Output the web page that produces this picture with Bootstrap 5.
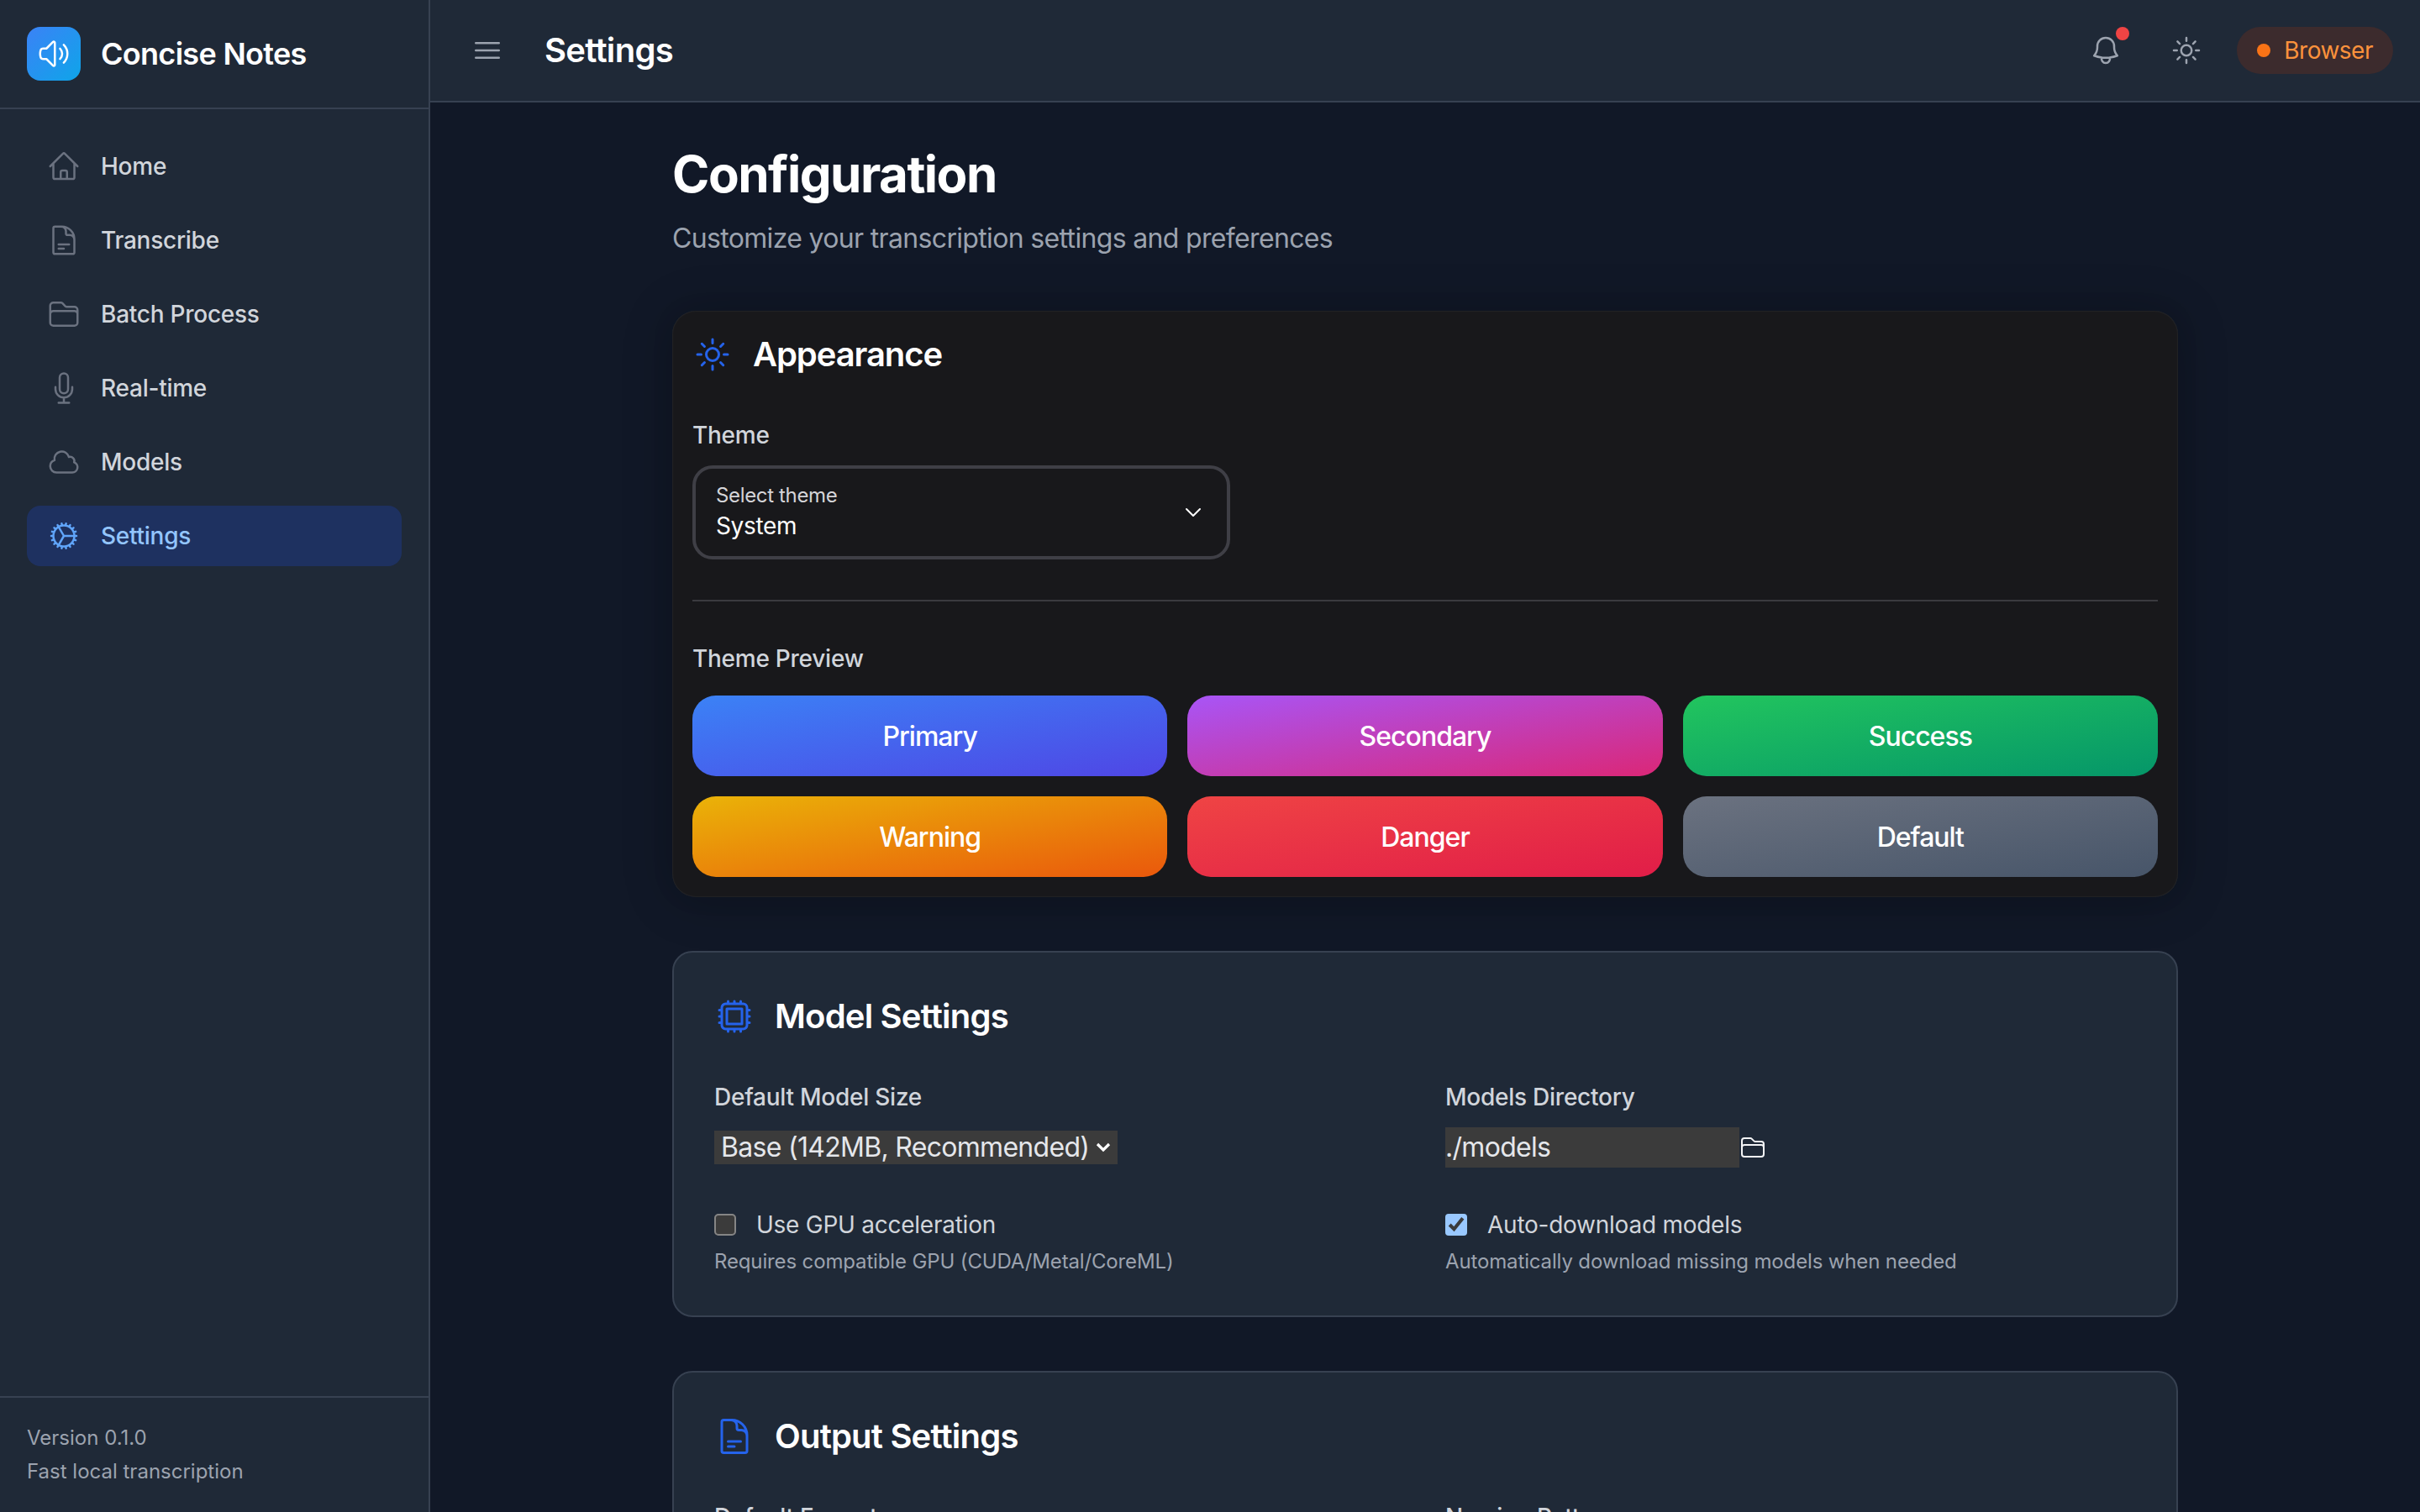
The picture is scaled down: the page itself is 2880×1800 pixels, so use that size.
<!DOCTYPE html>
<html lang="en" data-bs-theme="dark">
  <head>
    <meta charset="UTF-8" />
    <meta name="viewport" content="width=device-width, initial-scale=1.0" />
    <title>Concise Notes - Settings</title>
    <link href="https://cdn.jsdelivr.net/npm/bootstrap@5.3.3/dist/css/bootstrap.min.css" rel="stylesheet" />
    <style>
      html, body { height: 100%; }
      body {
        font-family: Inter, "Liberation Sans", sans-serif;
        font-size: 28px;
        letter-spacing: -0.25px;
        background: #111827;
        color: #d1d5db;
        color-scheme: dark;
      }
      svg { display: block; flex: none; fill: none; stroke: currentColor; stroke-width: 1.5; stroke-linecap: round; stroke-linejoin: round; }
      .ico-20 { width: 40px; height: 40px; }
      .ico-24 { width: 48px; height: 48px; }
      .ico-16 { width: 32px; height: 32px; }

      /* sidebar */
      .side-bar { width: 512px; flex: none; background: #1f2937; border-right: 2px solid #374151; }
      .brand-row { height: 130px; padding: 0 32px; gap: 24px; border-bottom: 2px solid #374151; }
      .brand-logo { width: 64px; height: 64px; border-radius: 16px; background: linear-gradient(to bottom right, #3b82f6, #0ea5e9); color: #fff; }
      .brand-name { font-size: 36px; line-height: 56px; font-weight: 600; color: #fff; letter-spacing: -0.7px; }
      .side-nav { padding: 32px; gap: 16px; }
      .side-link { height: 72px; padding: 0 24px; gap: 24px; border-radius: 16px; color: #d1d5db; font-weight: 500; text-decoration: none; }
      .side-link svg { color: #6b7280; }
      .side-link.on { background: #1e3a8a80; color: #93c5fd; }
      .side-link.on svg { color: #60a5fa; }
      .side-foot { padding: 32px; border-top: 2px solid #374151; font-size: 24px; line-height: 32px; color: #9ca3af; letter-spacing: 0; }
      .side-foot p { margin: 0; }
      .side-foot p + p { margin-top: 8px; }

      /* top bar */
      .top-bar { height: 122px; flex: none; padding: 0 32px 0 48px; background: #1f2937; border-bottom: 2px solid #374151; }
      .top-title { font-size: 40px; line-height: 56px; font-weight: 600; color: #fff; margin: 0 0 0 48px; letter-spacing: -0.7px; }
      .top-btn { color: #9ca3af; background: none; border: 0; padding: 0; }
      .bell-dot { width: 16px; height: 16px; top: -8px; right: -8px; background: #ef4444; border-radius: 50%; }
      .mode-pill { height: 56px; padding: 0 24px; gap: 16px; border-radius: 28px; background: #3c2b2d; color: #fb923c; letter-spacing: -0.5px; }
      .mode-dot { width: 16px; height: 16px; border-radius: 50%; background: #f97316; }
      .top-tools { gap: 40px; }
      .bell-wrap { margin-right: 16px; }

      /* page */
      .page-area { background: #111827; min-height: 0; }
      .page-inner { width: 1792px; margin: 0 auto; padding-top: 49px; }
      .page-title { font-size: 60px; line-height: 72px; font-weight: 700; color: #fff; margin: 0 0 17px; letter-spacing: -1.5px; }
      .page-sub { font-size: 32px; line-height: 48px; color: #9ca3af; margin: 0 0 62px; letter-spacing: -0.66px; }

      /* appearance card */
      .look-card { background: #18181b; border: 0; border-radius: 28px; margin-bottom: 64px; box-shadow: 0 0 30px rgba(0, 0, 0, .06), 0 4px 60px rgba(0, 0, 0, .22), inset 0 0 2px rgba(255, 255, 255, .15); color: #d1d5db; }
      .look-head { padding: 24px; gap: 24px; }
      .look-head svg { color: #2563eb; }
      .look-title { font-size: 40px; line-height: 56px; font-weight: 600; color: #fff; margin: 0; letter-spacing: -1.1px; }
      .set-title { letter-spacing: -0.8px; }
      .look-body { padding: 24px; }
      .field-label { font-weight: 500; line-height: 40px; margin: 0 0 16px; display: block; }
      .theme-pick { width: 640px; height: 112px; padding: 0 24px; border: 4px solid #3f3f46; border-radius: 24px; background: none; text-align: left; color: #fff; letter-spacing: -0.35px; }
      .theme-pick small { display: block; font-size: 24px; line-height: 32px; color: #d4d4d8; }
      .theme-pick span { display: block; font-size: 28px; line-height: 40px; }
      .look-rule { height: 2px; margin: 48px 0; background: #3a3a3f; }
      .preview-grid { display: grid; grid-template-columns: repeat(3, 1fr); gap: 24px; }
      .preview-btn { height: 96px; border: 0; border-radius: 28px; padding: 2px 0 0; font-size: 32px; font-weight: 500; color: #fff; letter-spacing: -1px; }
      .grad-primary { background: linear-gradient(to bottom right, #3b82f6, #4f46e5); }
      .grad-secondary { background: linear-gradient(to bottom right, #a855f7, #db2777); }
      .grad-success { background: linear-gradient(to bottom right, #22c55e, #059669); }
      .grad-warning { background: linear-gradient(to bottom right, #eab308, #ea580c); }
      .grad-danger { background: linear-gradient(to bottom right, #ef4444, #e11d48); }
      .grad-default { background: linear-gradient(to bottom right, #6b7280, #475569); }

      /* settings panels */
      .set-panel { background: #1f2937; border: 2px solid #374151; border-radius: 24px; padding: 48px; margin-bottom: 64px; }
      .set-head { gap: 24px; margin-bottom: 48px; }
      .set-head svg { color: #2563eb; }
      .set-grid { display: grid; grid-template-columns: 1fr 1fr; gap: 48px; }
      .ctl-row { height: 48px; }
      .native-ctl { zoom: 2; font-family: inherit; font-size: 16px; letter-spacing: -0.35px; color: #e5e7eb; }
      select.native-ctl {
        appearance: none;
        width: 240px;
        height: 20px;
        padding: 0 4px;
        line-height: 19px;
        border: 0;
        border-radius: 0;
        background: #3b3b3b url("data:image/svg+xml,%3Csvg xmlns='http://www.w3.org/2000/svg' viewBox='0 0 9 6'%3E%3Cpath d='M1 1l3.5 3.5L8 1' fill='none' stroke='%23fff' stroke-width='1.6'/%3E%3C/svg%3E") no-repeat right 4px center / 9px 6px;
      }
      input.native-ctl[type="text"] { width: 175px; padding: 0; border: 0; background: #3b3b3b; outline: 0; }
      input.native-ctl[type="checkbox"] { margin: 0; }
      .folder-btn { background: none; border: 0; padding: 0; color: #f3f4f6; }
      .check-row { gap: 24px; line-height: 40px; }
      .check-row label { margin: 0; }
      .hint-line { margin: 8px 0 0; font-size: 24px; line-height: 32px; color: #9ca3af; letter-spacing: -0.14px; }
    </style>
  </head>
  <body class="d-flex overflow-hidden">
    <aside class="side-bar d-flex flex-column">
      <div class="brand-row d-flex align-items-center">
        <div class="brand-logo d-flex align-items-center justify-content-center">
          <svg class="ico-20" viewBox="0 0 24 24"><path d="M19.114 5.636a9 9 0 0 1 0 12.728M16.463 8.288a5.25 5.25 0 0 1 0 7.424M6.75 8.25l4.72-4.72a.75.75 0 0 1 1.28.53v15.88a.75.75 0 0 1-1.28.53l-4.72-4.72H4.51c-.88 0-1.704-.507-1.938-1.354A9.009 9.009 0 0 1 2.25 12c0-.83.112-1.633.322-2.396C2.806 8.756 3.63 8.25 4.51 8.25H6.75Z" /></svg>
        </div>
        <span class="brand-name">Concise Notes</span>
      </div>

      <nav class="side-nav d-flex flex-column flex-grow-1">
        <a class="side-link d-flex align-items-center" href="#">
          <svg class="ico-20" viewBox="0 0 24 24"><path d="m2.25 12 8.954-8.955c.44-.439 1.152-.439 1.591 0L21.75 12M4.5 9.75v10.125c0 .621.504 1.125 1.125 1.125H9.75v-4.875c0-.621.504-1.125 1.125-1.125h2.25c.621 0 1.125.504 1.125 1.125V21h4.125c.621 0 1.125-.504 1.125-1.125V9.75M8.25 21h8.25" /></svg>
          Home
        </a>
        <a class="side-link d-flex align-items-center" href="#">
          <svg class="ico-20" viewBox="0 0 24 24"><path d="M19.5 14.25v-2.625a3.375 3.375 0 0 0-3.375-3.375h-1.5A1.125 1.125 0 0 1 13.5 7.125v-1.5a3.375 3.375 0 0 0-3.375-3.375H8.25m0 12.75h7.5m-7.5 3H12M10.5 2.25H5.625c-.621 0-1.125.504-1.125 1.125v17.25c0 .621.504 1.125 1.125 1.125h12.75c.621 0 1.125-.504 1.125-1.125V11.25a9 9 0 0 0-9-9Z" /></svg>
          Transcribe
        </a>
        <a class="side-link d-flex align-items-center" href="#">
          <svg class="ico-20" viewBox="0 0 24 24"><path d="M2.25 12.75V12A2.25 2.25 0 0 1 4.5 9.75h15A2.25 2.25 0 0 1 21.75 12v.75m-8.69-6.44-2.12-2.12a1.5 1.5 0 0 0-1.061-.44H4.5A2.25 2.25 0 0 0 2.25 6v12a2.25 2.25 0 0 0 2.25 2.25h15A2.25 2.25 0 0 0 21.75 18V9a2.25 2.25 0 0 0-2.25-2.25h-5.379a1.5 1.5 0 0 1-1.06-.44Z" /></svg>
          Batch Process
        </a>
        <a class="side-link d-flex align-items-center" href="#">
          <svg class="ico-20" viewBox="0 0 24 24"><path d="M12 18.75a6 6 0 0 0 6-6v-1.5m-6 7.5a6 6 0 0 1-6-6v-1.5m6 7.5v3.75m-3.75 0h7.5M12 15.75a3 3 0 0 1-3-3V4.5a3 3 0 1 1 6 0v8.25a3 3 0 0 1-3 3Z" /></svg>
          Real-time
        </a>
        <a class="side-link d-flex align-items-center" href="#">
          <svg class="ico-20" viewBox="0 0 24 24"><path d="M2.25 15a4.5 4.5 0 0 0 4.5 4.5H18a3.75 3.75 0 0 0 1.332-7.257 3 3 0 0 0-3.758-3.848 5.25 5.25 0 0 0-10.233 2.33A4.5 4.5 0 0 0 2.25 15Z" /></svg>
          Models
        </a>
        <a class="side-link on d-flex align-items-center" href="#">
          <svg class="ico-20" viewBox="0 0 24 24"><path d="M4.5 12a7.5 7.5 0 0 0 15 0m-15 0a7.5 7.5 0 1 1 15 0m-15 0H3m16.5 0H21m-1.5 0H12m-8.457 3.077 1.41-.513m14.095-5.13 1.41-.513M5.106 17.785l1.15-.964m11.49-9.642 1.149-.964M7.501 19.795l.75-1.3m7.5-12.99.75-1.3m-6.063 16.658.26-1.477m2.605-14.772.26-1.477m0 17.726-.26-1.477M10.698 4.614l-.26-1.477M16.5 19.794l-.75-1.299M7.5 4.205 12 12m6.894 5.785-1.149-.964M6.256 7.178l-1.15-.964m15.352 8.864-1.41-.513M4.954 9.435l-1.41-.514M12.002 12l-3.75 6.495" /></svg>
          Settings
        </a>
      </nav>

      <div class="side-foot">
        <p>Version 0.1.0</p>
        <p>Fast local transcription</p>
      </div>
    </aside>

    <div class="d-flex flex-column flex-grow-1 overflow-hidden">
      <header class="top-bar d-flex align-items-center justify-content-between">
        <div class="d-flex align-items-center">
          <button class="top-btn" type="button" aria-label="Menu">
            <svg class="ico-20" viewBox="0 0 24 24"><path d="M3.75 6.75h16.5M3.75 12h16.5m-16.5 5.25h16.5" /></svg>
          </button>
          <h1 class="top-title">Settings</h1>
        </div>
        <div class="top-tools d-flex align-items-center">
          <button class="top-btn bell-wrap position-relative" type="button" aria-label="Notifications">
            <svg class="ico-20" viewBox="0 0 24 24"><path d="M14.857 17.082a23.848 23.848 0 0 0 5.454-1.31A8.967 8.967 0 0 1 18 9.75V9A6 6 0 0 0 6 9v.75a8.967 8.967 0 0 1-2.312 6.022c1.733.64 3.56 1.085 5.455 1.31m5.714 0a24.255 24.255 0 0 1-5.714 0m5.714 0a3 3 0 1 1-5.714 0" /></svg>
            <span class="bell-dot position-absolute"></span>
          </button>
          <button class="top-btn" type="button" aria-label="Theme">
            <svg class="ico-20" viewBox="0 0 24 24"><path d="M12 3v2.25m6.364.386-1.591 1.591M21 12h-2.25m-.386 6.364-1.591-1.591M12 18.75V21m-4.773-4.227-1.591 1.591M5.25 12H3m4.227-4.773L5.636 5.636M15.75 12a3.75 3.75 0 1 1-7.5 0 3.75 3.75 0 0 1 7.5 0Z" /></svg>
          </button>
          <div class="mode-pill d-flex align-items-center">
            <span class="mode-dot"></span>
            Browser
          </div>
        </div>
      </header>

      <main class="page-area flex-grow-1 overflow-hidden">
        <div class="page-inner">
          <h2 class="page-title">Configuration</h2>
          <p class="page-sub">Customize your transcription settings and preferences</p>

          <section class="card look-card">
            <div class="look-head d-flex align-items-center">
              <svg class="ico-24" viewBox="0 0 24 24"><path d="M12 3v2.25m6.364.386-1.591 1.591M21 12h-2.25m-.386 6.364-1.591-1.591M12 18.75V21m-4.773-4.227-1.591 1.591M5.25 12H3m4.227-4.773L5.636 5.636M15.75 12a3.75 3.75 0 1 1-7.5 0 3.75 3.75 0 0 1 7.5 0Z" /></svg>
              <h3 class="look-title">Appearance</h3>
            </div>
            <div class="look-body">
              <span class="field-label">Theme</span>
              <button class="theme-pick d-flex align-items-center justify-content-between" type="button">
                <div>
                  <small>Select theme</small>
                  <span>System</span>
                </div>
                <svg class="ico-16" viewBox="0 0 24 24"><path d="m6 9 6 6 6-6" /></svg>
              </button>
              <div class="look-rule"></div>
              <span class="field-label mb-4">Theme Preview</span>
              <div class="preview-grid">
                <button class="preview-btn grad-primary" type="button">Primary</button>
                <button class="preview-btn grad-secondary" type="button">Secondary</button>
                <button class="preview-btn grad-success" type="button">Success</button>
                <button class="preview-btn grad-warning" type="button">Warning</button>
                <button class="preview-btn grad-danger" type="button">Danger</button>
                <button class="preview-btn grad-default" type="button">Default</button>
              </div>
            </div>
          </section>

          <section class="set-panel">
            <div class="set-head d-flex align-items-center">
              <svg class="ico-24" viewBox="0 0 24 24"><path d="M8.25 3v1.5M4.5 8.25H3m18 0h-1.5M4.5 12H3m18 0h-1.5m-15 3.75H3m18 0h-1.5M8.25 19.5V21M12 3v1.5m0 15V21m3.75-18v1.5m0 15V21m-9-1.5h10.5a2.25 2.25 0 0 0 2.25-2.25V6.75a2.25 2.25 0 0 0-2.25-2.25H6.75A2.25 2.25 0 0 0 4.5 6.75v10.5a2.25 2.25 0 0 0 2.25 2.25Zm.75-12h9v9h-9v-9Z" /></svg>
              <h3 class="look-title set-title">Model Settings</h3>
            </div>
            <div class="set-grid">
              <div>
                <label class="field-label" for="model-size">Default Model Size</label>
                <div class="ctl-row d-flex align-items-center">
                  <select class="native-ctl" id="model-size">
                    <option>Base (142MB, Recommended)</option>
                  </select>
                </div>
              </div>
              <div>
                <label class="field-label" for="model-dir">Models Directory</label>
                <div class="ctl-row d-flex align-items-center">
                  <input class="native-ctl" id="model-dir" type="text" value="./models" />
                  <button class="folder-btn" type="button" aria-label="Browse">
                    <svg class="ico-16" viewBox="0 0 24 24"><path d="M2.25 12.75V12A2.25 2.25 0 0 1 4.5 9.75h15A2.25 2.25 0 0 1 21.75 12v.75m-8.69-6.44-2.12-2.12a1.5 1.5 0 0 0-1.061-.44H4.5A2.25 2.25 0 0 0 2.25 6v12a2.25 2.25 0 0 0 2.25 2.25h15A2.25 2.25 0 0 0 21.75 18V9a2.25 2.25 0 0 0-2.25-2.25h-5.379a1.5 1.5 0 0 1-1.06-.44Z" /></svg>
                  </button>
                </div>
              </div>
              <div>
                <div class="check-row d-flex align-items-center">
                  <input class="native-ctl" id="use-gpu" type="checkbox" />
                  <label for="use-gpu">Use GPU acceleration</label>
                </div>
                <p class="hint-line">Requires compatible GPU (CUDA/Metal/CoreML)</p>
              </div>
              <div>
                <div class="check-row d-flex align-items-center">
                  <input class="native-ctl" id="auto-dl" type="checkbox" checked />
                  <label for="auto-dl">Auto-download models</label>
                </div>
                <p class="hint-line">Automatically download missing models when needed</p>
              </div>
            </div>
          </section>

          <section class="set-panel">
            <div class="set-head d-flex align-items-center">
              <svg class="ico-24" viewBox="0 0 24 24"><path d="M19.5 14.25v-2.625a3.375 3.375 0 0 0-3.375-3.375h-1.5A1.125 1.125 0 0 1 13.5 7.125v-1.5a3.375 3.375 0 0 0-3.375-3.375H8.25m0 12.75h7.5m-7.5 3H12M10.5 2.25H5.625c-.621 0-1.125.504-1.125 1.125v17.25c0 .621.504 1.125 1.125 1.125h12.75c.621 0 1.125-.504 1.125-1.125V11.25a9 9 0 0 0-9-9Z" /></svg>
              <h3 class="look-title set-title">Output Settings</h3>
            </div>
            <div class="set-grid">
              <div><span class="field-label">Default Format</span></div>
              <div><span class="field-label">Naming Pattern</span></div>
            </div>
          </section>
        </div>
      </main>
    </div>
  </body>
</html>
